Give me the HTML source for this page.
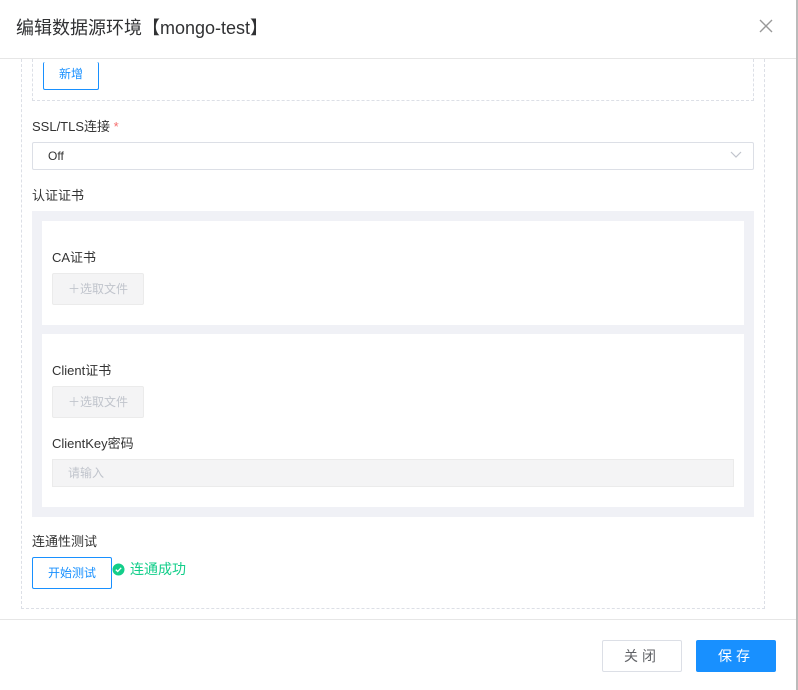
<!DOCTYPE html>
<html><head><meta charset="utf-8"><style>
*{box-sizing:border-box;margin:0;padding:0}
body{width:798px;height:690px;background:#fff;font-family:"Liberation Sans","Noto Sans CJK SC",sans-serif;position:relative;overflow:hidden;color:#333}
.a{position:absolute}
.lbl{font-size:13px;color:#333;line-height:16px}
.btn{position:absolute;border:1px solid #1890ff;color:#1890ff;font-size:12px;text-align:center;border-radius:2px;background:#fff}
.up{position:absolute;background:#f4f4f5;border:1px solid #ebebeb;color:#c0c4cc;font-size:12px;text-align:center;border-radius:2px}
</style></head><body>
<div class="a" style="left:16px;top:16px;font-size:18px;color:#303133;line-height:24px">编辑数据源环境【mongo-test】</div>
<svg class="a" style="left:759px;top:19px" width="14" height="14" viewBox="0 0 14 14"><path d="M1 1L13 13M13 1L1 13" stroke="#999" stroke-width="1.4"/></svg>
<div class="a" style="left:0;top:58px;width:796px;height:1px;background:#e6e6e6"></div>
<div class="a" style="left:796px;top:0;width:2px;height:690px;background:#bbb"></div>
<div class="a" style="left:21px;top:59px;width:744px;height:550px;border:1px dashed #dcdfe6;border-top:none"></div>
<div class="a" style="left:32px;top:59px;width:722px;height:42px;border:1px dashed #dcdfe6;border-top:none"></div>
<div class="btn" style="left:43px;top:62px;width:56px;height:28px;line-height:24px;border-top:none">新增</div>
<div class="a lbl" style="left:32px;top:119px">SSL/TLS连接 <span style="color:#f56c6c">*</span></div>
<div class="a" style="left:32px;top:142px;width:722px;height:28px;border:1px solid #dcdfe6;border-radius:2px;font-size:12px;line-height:27px;padding-left:15px;color:#333">Off</div>
<svg class="a" style="left:730px;top:151px" width="12" height="8" viewBox="0 0 12 8"><path d="M1 1L6 6L11 1" stroke="#c0c4cc" fill="none" stroke-width="1.2"/></svg>
<div class="a lbl" style="left:32px;top:188px">认证证书</div>
<div class="a" style="left:32px;top:211px;width:722px;height:306px;background:#f0f1f6"></div>
<div class="a" style="left:42px;top:221px;width:702px;height:104px;background:#fff"></div>
<div class="a" style="left:42px;top:334px;width:702px;height:173px;background:#fff"></div>
<div class="a lbl" style="left:52px;top:250px">CA证书</div>
<div class="up" style="left:52px;top:273px;width:92px;height:32px;line-height:31px">＋选取文件</div>
<div class="a lbl" style="left:52px;top:363px">Client证书</div>
<div class="up" style="left:52px;top:386px;width:92px;height:32px;line-height:31px">＋选取文件</div>
<div class="a lbl" style="left:52px;top:436px">ClientKey密码</div>
<div class="a" style="left:52px;top:459px;width:682px;height:28px;background:#f4f4f5;border:1px solid #ebebeb;font-size:12px;color:#c0c4cc;line-height:27px;padding-left:15px">请输入</div>
<div class="a lbl" style="left:32px;top:534px">连通性测试</div>
<div class="btn" style="left:32px;top:557px;width:80px;height:32px;line-height:31px">开始测试</div>
<svg class="a" style="left:112px;top:563px" width="13" height="13" viewBox="0 0 13 13"><circle cx="6.5" cy="6.5" r="6" fill="#13ce8a"/><path d="M3.8 6.6L5.7 8.4L9.2 4.8" stroke="#fff" fill="none" stroke-width="1.3"/></svg>
<div class="a" style="left:130px;top:561px;font-size:14px;color:#13ce8a;line-height:17px">连通成功</div>
<div class="a" style="left:0;top:619px;width:796px;height:1px;background:#e6e6e6"></div>
<div class="a" style="left:602px;top:640px;width:80px;height:32px;border:1px solid #dcdfe6;border-radius:2px;text-align:center;line-height:30px;font-size:14px;color:#606266;letter-spacing:4px">关闭</div>
<div class="a" style="left:696px;top:640px;width:80px;height:32px;background:#1890ff;border-radius:2px;text-align:center;line-height:32px;font-size:14px;color:#fff;letter-spacing:4px">保存</div>
</body></html>
